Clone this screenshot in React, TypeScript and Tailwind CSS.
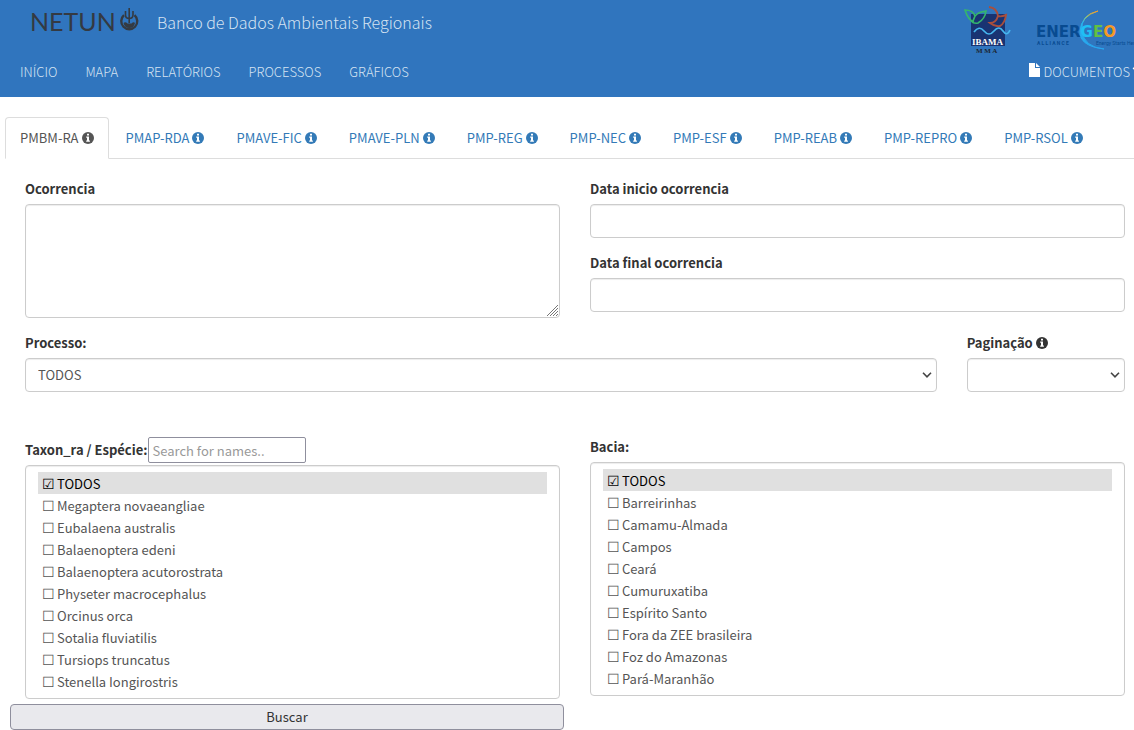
import { useState } from "react";
import { FaChevronDown } from "react-icons/fa";

const menu = ["INÍCIO", "MAPA", "RELATÓRIOS", "PROCESSOS", "GRÁFICOS"];

const tabs = [
  "PMBM-RA",
  "PMAP-RDA",
  "PMAVE-FIC",
  "PMAVE-PLN",
  "PMP-REG",
  "PMP-NEC",
  "PMP-ESF",
  "PMP-REAB",
  "PMP-REPRO",
  "PMP-RSOL",
];

const species = [
  "Megaptera novaeangliae",
  "Eubalaena australis",
  "Balaenoptera edeni",
  "Balaenoptera acutorostrata",
  "Physeter macrocephalus",
  "Orcinus orca",
  "Sotalia fluviatilis",
  "Tursiops truncatus",
  "Stenella Iongirostris",
];

const basins = [
  "Barreirinhas",
  "Camamu-Almada",
  "Campos",
  "Ceará",
  "Cumuruxatiba",
  "Espírito Santo",
  "Fora da ZEE brasileira",
  "Foz do Amazonas",
  "Pará-Maranhão",
];

const control =
  "block w-full rounded-sm border border-[#ccc] bg-white px-3 text-[#555] shadow-[inset_0_1px_1px_rgba(0,0,0,0.075)]";

export default function App() {
  return (
    <div className="min-h-dvh overflow-x-hidden bg-white font-['Noto_Sans_CJK_SC','Noto_Sans',sans-serif] text-[13px] text-[#333]">
      <Header />
      <main>
        <Tabs />
        <SearchForm />
      </main>
    </div>
  );
}

function Header() {
  return (
    <header className="overflow-hidden bg-[#3075be] font-light text-[#d5e3f2]">
      <div className="flex h-[53px] items-start">
        <a href="#" aria-label="Netuno" className="ml-7 pt-2">
          <NetunoLogo />
        </a>
        <span className="ml-[17px] pt-2 text-base leading-7">Banco de Dados Ambientais Regionais</span>
        <div className="-mr-4 ml-auto flex shrink-0 gap-6 pt-1">
          <IbamaLogo />
          <EnergeoLogo />
        </div>
      </div>
      <nav className="flex h-11 items-start justify-between pt-[9px] leading-5">
        <div className="flex gap-7 pl-5">
          {menu.map((item) => (
            <a key={item} href="#">
              {item}
            </a>
          ))}
        </div>
        <a href="#" className="-mr-2 flex shrink-0 items-center">
          <svg viewBox="0 0 11 14" className="mr-1 mb-1 h-3.5 w-[11px]" fill="#fff">
            <path d="M0 0h6v5h5v9H0zM7 0l4 4H7z" />
          </svg>
          DOCUMENTOS
          <FaChevronDown className="mb-1 ml-0.5 size-2.5 text-white" />
        </a>
      </nav>
    </header>
  );
}

function Tabs() {
  const [active, setActive] = useState(tabs[0]);

  return (
    <div role="tablist" className="mt-5 ml-[5px] flex gap-0.5 border-b border-[#ddd]">
      {tabs.map((tab) => (
        <button
          key={tab}
          type="button"
          role="tab"
          aria-selected={tab === active}
          onClick={() => setActive(tab)}
          className="-mb-px flex h-[42px] shrink-0 items-center gap-[3px] rounded-t border border-transparent px-3.5 text-[#337ab7] aria-selected:border-[#ddd] aria-selected:border-b-white aria-selected:bg-white aria-selected:text-[#555]"
        >
          {tab}
          <InfoIcon />
        </button>
      ))}
    </div>
  );
}

function InfoIcon() {
  return (
    <svg viewBox="0 0 12 12" className="size-3 shrink-0" fill="currentColor">
      <circle cx="6" cy="6" r="6" />
      <path d="M5 1.800h2v1.700H5zM4.200 4.500H7v4h.9v1.300H4.200V8.500H5V5.800h-.8z" fill="#fff" />
    </svg>
  );
}

function SearchForm() {
  return (
    <form className="pt-5 leading-5" onSubmit={(e) => e.preventDefault()}>
      <div className="grid grid-cols-12 gap-x-[30px] pr-[9px] pl-[25px]">
        <div className="col-span-6">
          <label htmlFor="occurrence" className="mb-[5px] block font-bold">
            Ocorrencia
          </label>
          <div className="grid">
            <textarea
              id="occurrence"
              className={`${control} col-start-1 row-start-1 h-[114px] resize-none py-1.5`}
            />
            <svg
              viewBox="0 0 11 11"
              className="pointer-events-none col-start-1 row-start-1 mr-0.5 mb-0.5 size-[11px] self-end justify-self-end"
              stroke="#777"
            >
              <path d="M0 11L11 0M3 11l8-8M6 11l5-5M9 11l2-2" />
            </svg>
          </div>
        </div>
        <div className="col-span-6 flex flex-col gap-[15px]">
          <div>
            <label htmlFor="start" className="mb-[5px] block font-bold">
              Data inicio ocorrencia
            </label>
            <input id="start" className={`${control} h-[34px]`} />
          </div>
          <div>
            <label htmlFor="end" className="mb-[5px] block font-bold">
              Data final ocorrencia
            </label>
            <input id="end" className={`${control} h-[34px]`} />
          </div>
        </div>

        <div className="col-span-10 mt-[15px]">
          <label htmlFor="process" className="mb-[5px] block font-bold">
            Processo:
          </label>
          <Select id="process" options={["TODOS"]} />
        </div>
        <div className="col-span-2 mt-[15px]">
          <label htmlFor="paging" className="mb-[5px] flex items-center gap-[3px] font-bold">
            Paginação <InfoIcon />
          </label>
          <Select id="paging" options={["", "10", "25", "50"]} />
        </div>

        <div className="col-span-6 mt-[45px]">
          <div className="mb-0.5 flex items-center gap-px">
            <label htmlFor="taxon" className="font-bold">
              Taxon_ra / Espécie:
            </label>
            <input
              aria-label="Search for names"
              placeholder="Search for names.."
              className="h-[26px] w-[158px] rounded-xs border border-[#8f8f9d] px-[3px] placeholder:text-[#999]"
            />
          </div>
          <CheckList id="taxon" options={species} />
        </div>
        <div className="col-span-6 mt-[45px]">
          <label htmlFor="basin" className="mb-[5px] block font-bold">
            Bacia:
          </label>
          <CheckList id="basin" options={basins} />
        </div>
      </div>
      <div className="mt-[5px] grid grid-cols-2 gap-x-4 pl-2.5">
        <button
          type="submit"
          className="h-[26px] rounded border border-[#8f8f9d] bg-[#e9e9ed] text-[#333]"
        >
          Buscar
        </button>
      </div>
    </form>
  );
}

type SelectProps = { id: string; options: string[] };
function Select({ id, options }: SelectProps) {
  return (
    <div className="grid items-center">
      <select id={id} className={`${control} col-start-1 row-start-1 h-[34px] appearance-none`}>
        {options.map((option) => (
          <option key={option}>{option}</option>
        ))}
      </select>
      <svg
        viewBox="0 0 10 6"
        className="pointer-events-none col-start-1 row-start-1 mr-[5px] h-1.5 w-2.5 justify-self-end"
        fill="none"
        stroke="#444"
        strokeWidth="1.6"
      >
        <path d="M1 .8l4 4 4-4" />
      </svg>
    </div>
  );
}

type CheckListProps = { id: string; options: string[] };
function CheckList({ id, options }: CheckListProps) {
  const [selected, setSelected] = useState(["TODOS"]);

  return (
    <select
      id={id}
      multiple
      value={selected}
      onChange={(e) => setSelected(Array.from(e.target.selectedOptions, (o) => o.value))}
      className={`${control} h-[234px] py-1.5 [scrollbar-width:none]`}
    >
      {["TODOS", ...options].map((option) => (
        <option
          key={option}
          value={option}
          className="h-[22px] px-1 pt-0.5 pb-0 leading-5 before:mr-0.5 before:text-sm before:leading-none before:content-['☐'] checked:bg-[linear-gradient(#e0e0e0,#e0e0e0)] checked:text-black checked:before:content-['☑']"
        >
          {option}
        </option>
      ))}
    </select>
  );
}

function NetunoLogo() {
  return (
    <svg width="112" height="26" viewBox="0 0 112 26" className="overflow-visible" fill="#343a42">
      <text x="2" y="23" fontFamily="Lato" fontSize="25" fontWeight="400">
        NETUN
      </text>
      <g fill="none" stroke="#343a42">
        <path d="M96 7.200a8 8 0 1 0 10.500 0" strokeWidth="2.400" />
        <path d="M101.200 0v15M97.500 3v4q0 3.500 3.700 3.500T105 7V3" strokeWidth="1.600" />
      </g>
      <path d="M95.500 15q2-1.500 4 .5h4q2-2 3.500-.5-1 5-5.700 5t-5.800-5z" />
    </svg>
  );
}

function IbamaLogo() {
  return (
    <svg width="50" height="50" viewBox="0 0 50 50">
      <path d="M9 10h34v32H9z" fill="#193372" />
      <path
        d="M12 18Q6 16 3 6q8 0 10 6 3-4 11-5-1 8-8 12-4 1-7-2M13 12l-2 5"
        fill="none"
        stroke="#35b56d"
        strokeWidth="1.700"
      />
      <path
        d="M27 3q8 1 9 9 3 1 8-1-1 8-6 11-5 1-10-3 6 0 8-7"
        fill="none"
        stroke="#a94f3d"
        strokeWidth="1.900"
      />
      <path d="M12 28q5-7 10-1t10 0 9 0 7-1" fill="none" stroke="#45b5ee" strokeWidth="1.700" />
      <text x="10" y="41" fill="#fff" fontFamily="Liberation Serif" fontSize="9" fontWeight="700">
        IBAMA
      </text>
      <text x="14" y="49" fill="#1c2530" fontFamily="Liberation Serif" fontSize="7" fontWeight="700">
        M M A
      </text>
    </svg>
  );
}

function EnergeoLogo() {
  return (
    <svg width="114" height="50" viewBox="0 0 114 50">
      <defs>
        <linearGradient id="arc" x1="0" y1="0" x2="0" y2="1">
          <stop offset="0" stopColor="#f39a2b" />
          <stop offset="0.15" stopColor="#8fc07a" />
          <stop offset="0.3" stopColor="#27b5ee" />
          <stop offset="1" stopColor="#27a5ee" />
        </linearGradient>
      </defs>
      <path d="M62 7Q45 12 44 27t24 18Q48 43 46 27T62 7z" fill="url(#arc)" stroke="url(#arc)" />
      <text x="0" y="33" fontFamily="DejaVu Sans" fontWeight="700" fontSize="15" fill="#084b91">
        ENER
        <tspan fill="#1ec0f5">G</tspan>
        <tspan fill="#62c043">E</tspan>
        <tspan fill="#f59a23">O</tspan>
      </text>
      <g fill="#084b91" fontFamily="Roboto" fontSize="5">
        <text x="1" y="41" fontWeight="700">
          A L L I A N C E
        </text>
        <text x="60" y="41" fontWeight="400">
          Energy Starts Here
        </text>
      </g>
    </svg>
  );
}
